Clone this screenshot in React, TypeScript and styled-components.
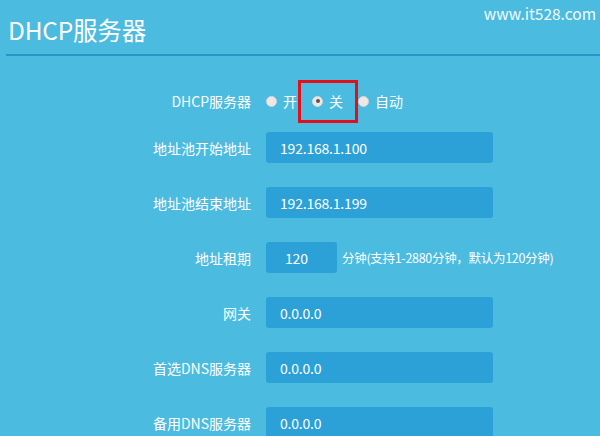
import React from 'react';
import styled, { createGlobalStyle } from 'styled-components';

const GlobalStyle = createGlobalStyle`
  html, body {
    margin: 0;
    padding: 0;
    background: #4bbbe0;
  }
  body {
    font-family: "Noto Sans CJK SC", "Noto Sans", sans-serif;
    color: #fff;
  }
`;

const Page = styled.div`
  width: 600px;
  height: 436px;
  overflow: hidden;
  position: relative;
  background: #4bbbe0;
`;

const Header = styled.div`
  margin-left: 6px;
  height: 54px;
  border-bottom: 2px solid #2b93c9;
  display: flex;
  justify-content: space-between;
  align-items: flex-start;
`;

const Title = styled.h1`
  margin: 14px 0 0 2px;
  font-size: 24.5px;
  font-weight: normal;
  line-height: 32px;
  letter-spacing: -0.2px;
`;

const Watermark = styled.span`
  margin: 2px 4px 0 0;
  font-size: 15.5px;
  line-height: 22px;
  color: #f4fbff;
`;

const Form = styled.div`
  display: grid;
  grid-template-columns: 251px 1fr;
  column-gap: 15px;
  padding-top: 26px;
`;

const Label = styled.div<{ $h?: number }>`
  height: ${(p) => p.$h ?? 31}px;
  display: flex;
  align-items: center;
  justify-content: flex-end;
  font-size: 14px;
  white-space: nowrap;
`;

const Cell = styled.div<{ $h?: number; $mb?: number }>`
  height: ${(p) => p.$h ?? 31}px;
  margin-bottom: ${(p) => p.$mb ?? 24}px;
  display: flex;
  align-items: center;
`;

const Options = styled.div`
  display: flex;
  align-items: center;
`;

const Option = styled.label`
  position: relative;
  display: flex;
  align-items: center;
  gap: 6px;
  margin-right: 15px;
  font-size: 14px;
`;

const Dot = styled.span<{ $on?: boolean }>`
  width: 9px;
  height: 9px;
  border-radius: 50%;
  background: #ece8e6;
  border: 1px solid #d6d6d6;
  display: flex;
  align-items: center;
  justify-content: center;
  &::after {
    content: '';
    width: 4px;
    height: 4px;
    border-radius: 50%;
    background: ${(p) => (p.$on ? '#555' : 'transparent')};
  }
`;

const Mark = styled.span`
  position: absolute;
  left: -14px;
  top: -11px;
  width: 54px;
  height: 37px;
  border: 3.5px solid #e3101c;
`;

const Field = styled.div<{ $w?: number; $pl?: number }>`
  width: ${(p) => p.$w ?? 227}px;
  height: 31px;
  box-sizing: border-box;
  padding-left: ${(p) => p.$pl ?? 14}px;
  background: #2ca1d7;
  border-radius: 3px;
  display: flex;
  align-items: center;
  font-size: 14px;
  letter-spacing: -0.2px;
`;

const Unit = styled.span`
  margin-left: 5px;
  font-size: 12.5px;
  letter-spacing: -0.3px;
  white-space: nowrap;
`;

const rows = [
  { label: '地址池开始地址', value: '192.168.1.100' },
  { label: '地址池结束地址', value: '192.168.1.199' },
];

const dnsRows = [
  { label: '网关', value: '0.0.0.0' },
  { label: '首选DNS服务器', value: '0.0.0.0' },
  { label: '备用DNS服务器', value: '0.0.0.0' },
];

export default function App() {
  return (
    <Page>
      <GlobalStyle />
      <Header>
        <Title>DHCP服务器</Title>
        <Watermark>www.it528.com</Watermark>
      </Header>
      <Form>
        <Label $h={38}>DHCP服务器</Label>
        <Cell $h={38} $mb={12}>
          <Options>
            <Option><Dot />开</Option>
            <Option><Dot $on />关<Mark /></Option>
            <Option><Dot />自动</Option>
          </Options>
        </Cell>
        {rows.map((r) => (
          <React.Fragment key={r.label}>
            <Label>{r.label}</Label>
            <Cell><Field>{r.value}</Field></Cell>
          </React.Fragment>
        ))}
        <Label>地址租期</Label>
        <Cell>
          <Field $w={71} $pl={19}>120</Field>
          <Unit>分钟(支持1-2880分钟，默认为120分钟)</Unit>
        </Cell>
        {dnsRows.map((r) => (
          <React.Fragment key={r.label}>
            <Label>{r.label}</Label>
            <Cell><Field>{r.value}</Field></Cell>
          </React.Fragment>
        ))}
      </Form>
    </Page>
  );
}
